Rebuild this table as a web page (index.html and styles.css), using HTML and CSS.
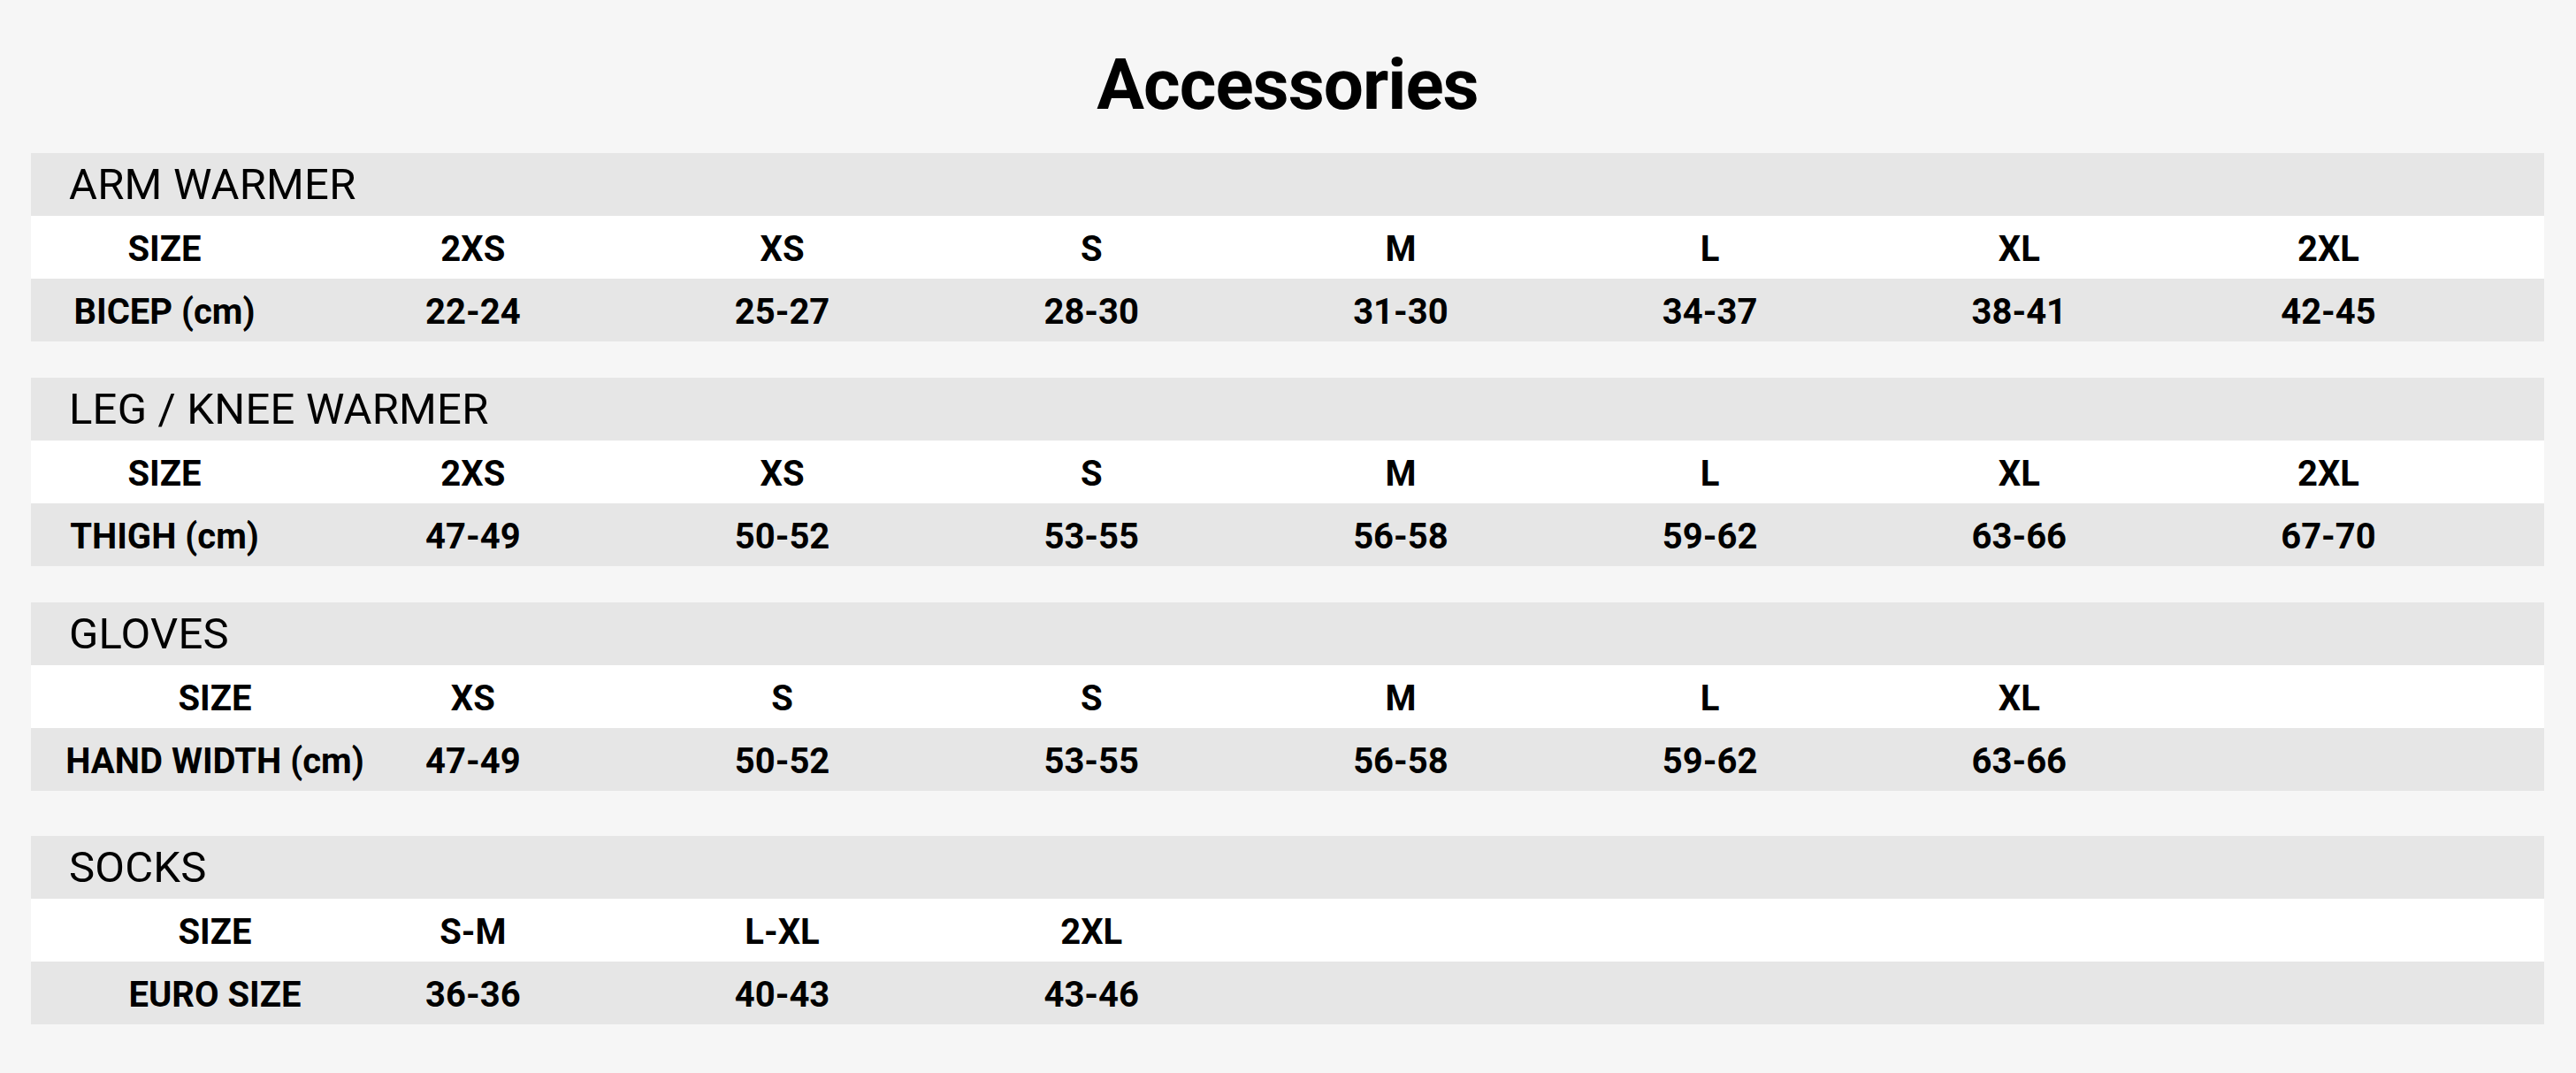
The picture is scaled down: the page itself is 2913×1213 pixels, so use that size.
FILE: index.html
```html
<!DOCTYPE html>
<html lang="en">
<head>
<meta charset="utf-8">
<title>Accessories</title>
<link rel="stylesheet" href="styles.css">
</head>
<body>
<main class="page">
  <h1 class="title">Accessories</h1>

  <section class="chart">
    <div class="chart-head">ARM WARMER</div>
    <div class="chart-row row-white">
      <div class="cell label">SIZE</div>
      <div class="cell">2XS</div><div class="cell">XS</div><div class="cell">S</div><div class="cell">M</div><div class="cell">L</div><div class="cell">XL</div><div class="cell">2XL</div>
    </div>
    <div class="chart-row row-gray">
      <div class="cell label">BICEP (cm)</div>
      <div class="cell">22-24</div><div class="cell">25-27</div><div class="cell">28-30</div><div class="cell">31-30</div><div class="cell">34-37</div><div class="cell">38-41</div><div class="cell">42-45</div>
    </div>
  </section>

  <section class="chart">
    <div class="chart-head">LEG / KNEE WARMER</div>
    <div class="chart-row row-white">
      <div class="cell label">SIZE</div>
      <div class="cell">2XS</div><div class="cell">XS</div><div class="cell">S</div><div class="cell">M</div><div class="cell">L</div><div class="cell">XL</div><div class="cell">2XL</div>
    </div>
    <div class="chart-row row-gray">
      <div class="cell label">THIGH (cm)</div>
      <div class="cell">47-49</div><div class="cell">50-52</div><div class="cell">53-55</div><div class="cell">56-58</div><div class="cell">59-62</div><div class="cell">63-66</div><div class="cell">67-70</div>
    </div>
  </section>

  <section class="chart">
    <div class="chart-head">GLOVES</div>
    <div class="chart-row row-white">
      <div class="cell label label-wide">SIZE</div>
      <div class="cell">XS</div><div class="cell">S</div><div class="cell">S</div><div class="cell">M</div><div class="cell">L</div><div class="cell">XL</div>
    </div>
    <div class="chart-row row-gray">
      <div class="cell label label-wide">HAND WIDTH (cm)</div>
      <div class="cell">47-49</div><div class="cell">50-52</div><div class="cell">53-55</div><div class="cell">56-58</div><div class="cell">59-62</div><div class="cell">63-66</div>
    </div>
  </section>

  <section class="chart chart-last">
    <div class="chart-head">SOCKS</div>
    <div class="chart-row row-white">
      <div class="cell label label-wide">SIZE</div>
      <div class="cell">S-M</div><div class="cell">L-XL</div><div class="cell">2XL</div>
    </div>
    <div class="chart-row row-gray">
      <div class="cell label label-wide">EURO SIZE</div>
      <div class="cell">36-36</div><div class="cell">40-43</div><div class="cell">43-46</div>
    </div>
  </section>
</main>
</body>
</html>
```

FILE: styles.css
```css
html, body {
  margin: 0;
  padding: 0;
}

body {
  background: #f6f6f6;
  color: #000;
  font-family: Roboto, "Liberation Sans", sans-serif;
  width: 2913px;
  height: 1213px;
  overflow: hidden;
}

.page {
  padding: 56px 36px 0 35px;
  display: flex;
  flex-direction: column;
}

.title {
  margin: 0 0 37px 0;
  height: 80px;
  font-size: 80px;
  line-height: 80px;
  font-weight: 700;
  text-align: center;
  letter-spacing: -1px;
}

.chart {
  display: flex;
  flex-direction: column;
  margin-bottom: 41px;
}

.chart-last {
  margin-top: 10px;
}

.chart-head {
  height: 71px;
  background: #e6e6e6;
  display: flex;
  align-items: center;
  padding-left: 43px;
  font-size: 49px;
  line-height: 49px;
  font-weight: 400;
  letter-spacing: 0.2px;
}

.chart-row {
  height: 71px;
  display: grid;
  grid-template-columns: 325px repeat(7, 349.7px);
  align-items: center;
}

.row-white {
  background: #ffffff;
}

.row-gray {
  background: #e6e6e6;
}

.cell {
  display: flex;
  justify-content: center;
  white-space: nowrap;
  padding-top: 4px;
  font-size: 40px;
  line-height: 40px;
  font-weight: 700;
}

.label {
  padding-right: 23px;
}

.label-wide {
  padding-right: 0;
  padding-left: 91px;
}
```
